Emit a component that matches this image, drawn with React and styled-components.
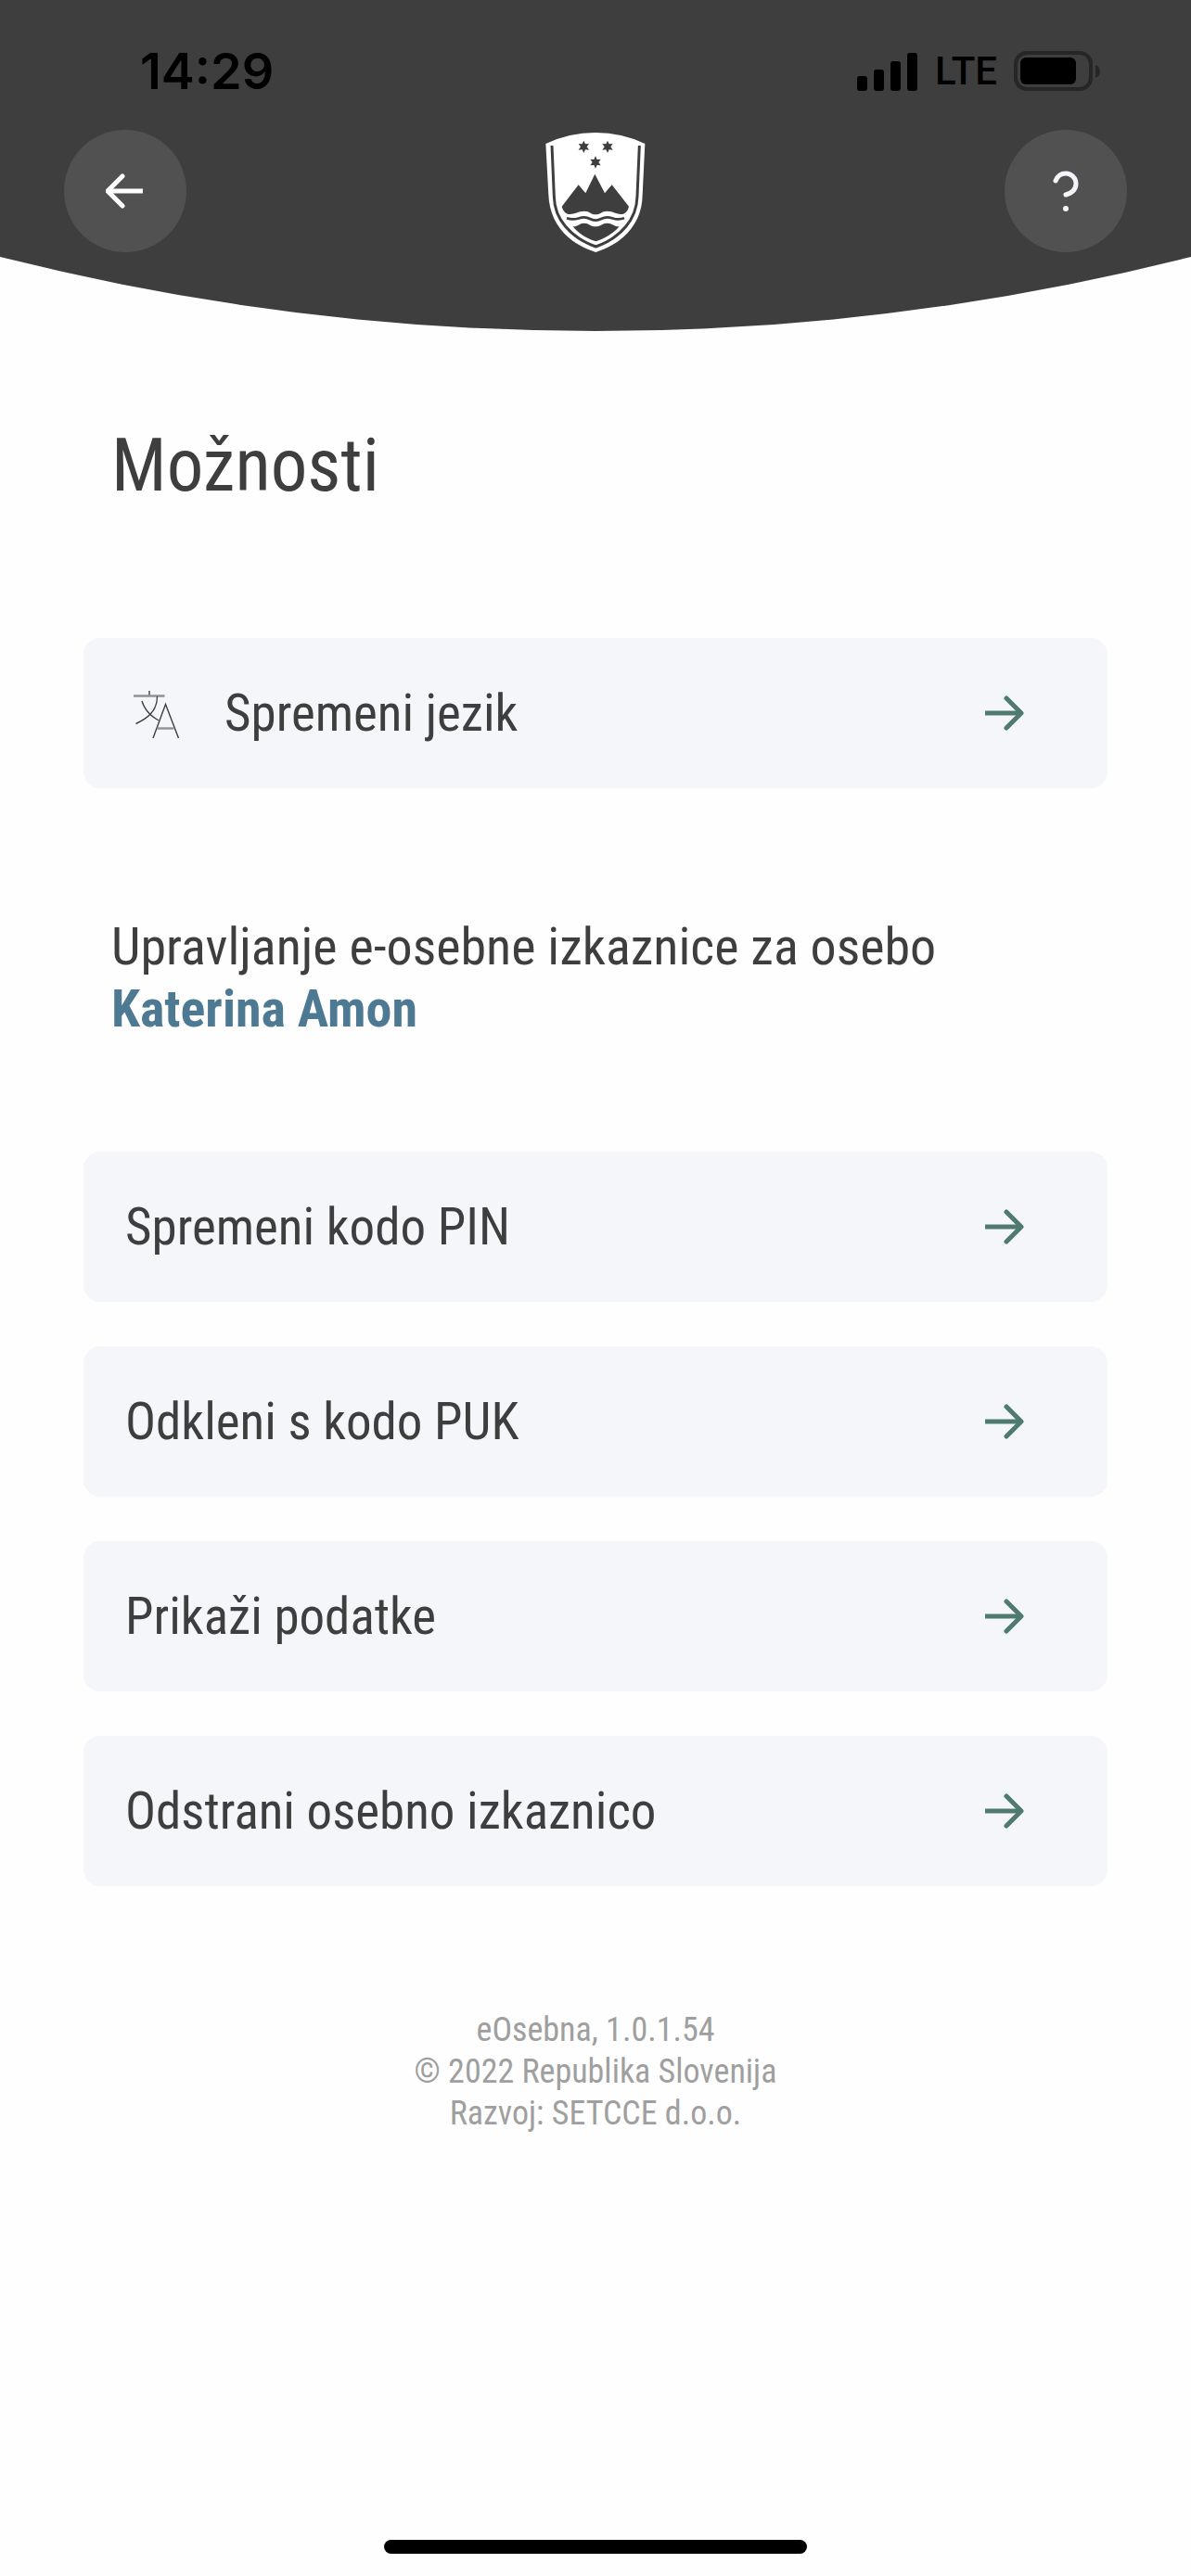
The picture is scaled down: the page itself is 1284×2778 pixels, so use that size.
import React from "react";
import styled, { createGlobalStyle } from "styled-components";

const cardActions = [
  { id: 1, text: "Spremeni kodo PIN" },
  { id: 2, text: "Odkleni s kodo PUK" },
  { id: 3, text: "Prikaži podatke" },
  { id: 4, text: "Odstrani osebno izkaznico" },
];

const star = "M0 -20 L5 -9 L17 -10 L10 0 L17 10 L5 9 L0 20 L-5 9 L-17 10 L-10 0 L-17 -10 L-5 -9 Z";

const ArrowIcon = () => (
  <svg width="42" height="38" viewBox="0 0 42 38" fill="none" stroke="currentColor" strokeWidth="5" aria-hidden="true">
    <path d="M0 19 H37" />
    <path d="M23 3 L39 19 L23 35" strokeLinecap="round" strokeLinejoin="round" />
  </svg>
);

const BackIcon = () => (
  <svg width="42" height="38" viewBox="0 0 42 38" fill="none" stroke="currentColor" strokeWidth="5" aria-hidden="true">
    <path d="M3 19 H40" />
    <path d="M18 3 L2 19 L18 35" strokeLinecap="round" strokeLinejoin="round" />
  </svg>
);

const QuestionIcon = () => (
  <svg width="30" height="46" viewBox="0 0 30 46" fill="none" aria-hidden="true">
    <path
      d="M4 12 C6 7 10 4 15 4 C21 4 26 9 26 15 C26 21 22 25 15 27"
      stroke="#f4f5fa"
      strokeWidth="5"
      strokeLinecap="round"
    />
    <circle cx="15" cy="42" r="3" fill="#f4f5fa" />
  </svg>
);

const LanguageIcon = () => (
  <svg width="67" height="58" viewBox="0 0 67 58" fill="none" stroke="#3e3e3e" strokeWidth="1.4" aria-hidden="true">
    <path d="M26 5 V10" />
    <path d="M9 10.5 H42.5" stroke="#909194" strokeWidth="2.4" />
    <path d="M34.5 11 C34.5 27 24 34.5 11.5 40.500" />
    <path d="M18 16 C21 26 27 32 36 37" />
    <path d="M30 56 L43.5 19.5 L57.5 56" />
    <path d="M34.5 45.5 H52.5" stroke="#909194" strokeWidth="2.4" />
  </svg>
);

const CoatOfArms = () => (
  <svg width="107" height="129" viewBox="86 66 321 387" role="img" aria-label="Grb Republike Slovenije" overflow="visible">
    <path
      fill="#fff"
      d="M84 105 Q160 69 245 69 Q330 69 405 105 L397 270 C396 360 340 425 246 456 C150 425 97 360 93 270 Z"
    />
    <path
      d="M104 111 L111 275 C112 350 165 409 246 438 C327 409 378 350 380 275 L387 111"
      fill="none"
      stroke="#3e3e3e"
      strokeWidth="9"
    />
    <g fill="#3e3e3e">
      <path d={star} transform="translate(207 115)" />
      <path d={star} transform="translate(284 115)" />
      <path d={star} transform="translate(245 165)" />
      <path d="M136 308 L190 238 L213 265 L243 203 L275 265 L298 238 L353 308 C350 320 345 328 335 332 C315 336 305 323 283 323 C262 323 264 334 245 334 C226 334 230 323 208 323 C186 323 176 336 154 332 C145 328 139 320 136 308 Z" />
      <path d="M172 373 C188 374 192 362 208 362 C226 362 226 373 245 373 C264 373 265 362 283 362 C300 362 305 374 322 373 C302 396 276 411 246 421 C215 411 190 396 172 373 Z" />
    </g>
    <path
      d="M152 346 C182 356 188 343 208 343 C228 343 226 353 245 353 C264 353 263 343 283 343 C303 343 308 356 338 346"
      fill="none"
      stroke="#3e3e3e"
      strokeWidth="8"
    />
  </svg>
);

const StatusIcons = () => (
  <Status>
    <svg width="66" height="42" viewBox="0 0 66 42" aria-hidden="true">
      <rect x="0" y="26" width="11" height="16" rx="3" />
      <rect x="18" y="19" width="11" height="23" rx="3" />
      <rect x="36" y="10" width="11" height="32" rx="3" />
      <rect x="54" y="1" width="11" height="41" rx="3" />
    </svg>
    <span>LTE</span>
    <svg width="94" height="44" viewBox="0 0 94 44" aria-hidden="true">
      <rect x="2" y="2" width="81" height="39" rx="12" fill="none" stroke="#262626" strokeWidth="4" />
      <rect x="7" y="7" width="60" height="29" rx="6" />
      <path d="M88 15 Q93 17 93 22 Q93 27 88 29 Z" fill="#262626" />
    </svg>
  </Status>
);

const OptionCard = ({ icon, text }) => {
  return (
    <Card type="button">
      {icon}
      <span className="label">{text}</span>
      <ArrowIcon />
    </Card>
  );
};

const App = () => {
  return (
    <Page>
      <GlobalStyle />
      <Header>
        <StatusBar>
          <time>14:29</time>
          <StatusIcons />
        </StatusBar>
        <NavBar>
          <RoundButton type="button" aria-label="Nazaj">
            <BackIcon />
          </RoundButton>
          <CoatOfArms />
          <RoundButton type="button" aria-label="Pomoč">
            <QuestionIcon />
          </RoundButton>
        </NavBar>
      </Header>
      <Content>
        <h1>Možnosti</h1>
        <OptionCard icon={<LanguageIcon />} text="Spremeni jezik" />
        <Owner>
          Upravljanje e-osebne izkaznice za osebo
          <strong>Katerina Amon</strong>
        </Owner>
        <CardList>
          {cardActions.map((action) => (
            <OptionCard key={action.id} text={action.text} />
          ))}
        </CardList>
      </Content>
      <Footer>
        <p>eOsebna, 1.0.1.54</p>
        <p>© 2022 Republika Slovenija</p>
        <p>Razvoj: SETCCE d.o.o.</p>
      </Footer>
      <HomeIndicator />
    </Page>
  );
};

const GlobalStyle = createGlobalStyle`
  * {
    box-sizing: border-box;
    margin: 0;
    padding: 0;
  }
  body {
    background: #fefefe;
    color: #3e3e3e;
    font-family: "Roboto Condensed", "Roboto", sans-serif;
  }
  svg {
    display: block;
    flex-shrink: 0;
  }
  button {
    border: none;
    font: inherit;
    color: inherit;
    cursor: pointer;
  }
`;

const Page = styled.div`
  min-height: 100vh;
  display: flex;
  flex-direction: column;
`;

const Header = styled.header`
  background: #3e3e3e;
  padding-bottom: 85px;
  clip-path: circle(2616px at 50% calc(100% - 2616px));
`;

const StatusBar = styled.div`
  height: 140px;
  padding: 13px 97px 0 151px;
  display: flex;
  align-items: center;
  justify-content: space-between;
  color: #000;
  font-family: "Inter", sans-serif;
  time {
    font-size: 54px;
    font-weight: 600;
  }
`;

const Status = styled.div`
  display: flex;
  align-items: center;
  gap: 18px;
  span {
    font-family: "Roboto", sans-serif;
    font-size: 42px;
    font-weight: 500;
  }
`;

const NavBar = styled.nav`
  padding: 0 69px;
  display: flex;
  align-items: center;
  justify-content: space-between;
`;

const RoundButton = styled.button`
  width: 132px;
  height: 132px;
  border-radius: 50%;
  background: #515151;
  color: #fff;
  display: flex;
  align-items: center;
  justify-content: center;
`;

const Content = styled.main`
  padding: 0 90px;
  h1 {
    padding: 100px 30px 141px;
    font-size: 79px;
    line-height: 90px;
    font-weight: 400;
  }
`;

const Card = styled.button`
  width: 100%;
  height: 162px;
  padding: 0 90px 0 45px;
  border-radius: 18px;
  background: #f5f6fa;
  color: #3e3e3e;
  display: flex;
  align-items: center;
  gap: 40px;
  font-size: 55px;
  text-align: left;
  .label {
    flex: 1;
  }
  .label + svg {
    color: #4f7a70;
  }
`;

const Owner = styled.p`
  padding: 138px 30px 120px;
  font-size: 56px;
  line-height: 67px;
  strong {
    display: block;
    color: #4d7a92;
  }
`;

const CardList = styled.div`
  display: grid;
  gap: 48px;
`;

const Footer = styled.footer`
  padding: 133px 90px 90px;
  color: #9f9f9f;
  font-size: 36px;
  line-height: 45px;
  text-align: center;
`;

const HomeIndicator = styled.div`
  width: 456px;
  height: 15px;
  margin: auto auto 24px;
  border-radius: 8px;
  background: #000;
`;

export default App;
